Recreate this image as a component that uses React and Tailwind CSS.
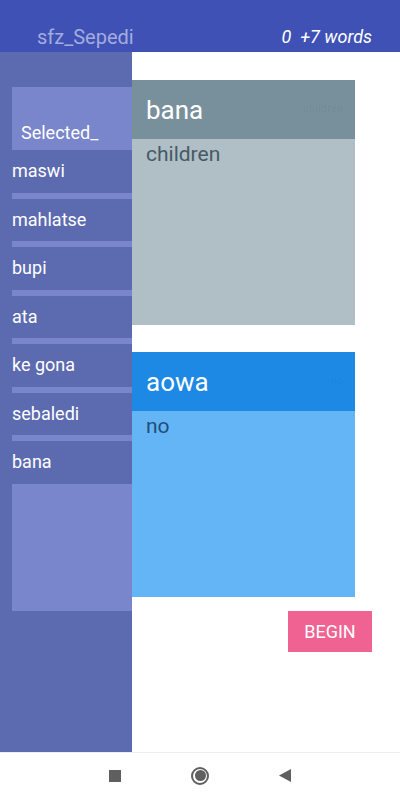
import React from 'react';

const words = ['maswi', 'mahlatse', 'bupi', 'ata', 'ke gona', 'sebaledi', 'bana'];

const Card = ({ title, meaning, head, body, text }) => (
    <div className="w-[223px]">
        <div className={`h-[59px] ${head} flex items-center justify-between pl-[14px] pr-[12px]`}>
            <span className="text-white text-[26px] leading-none">{title}</span>
            <span className="text-[11px] text-black/[0.04] font-bold">{meaning}</span>
        </div>
        <div className={`h-[186px] ${body} pl-[14px] pt-[3px]`}>
            <span className={`text-[21px] leading-[24px] ${text}`}>{meaning}</span>
        </div>
    </div>
);

const App = () => {
    return (
        <div className="w-[400px] h-[800px] flex flex-col bg-white overflow-hidden" style={{ fontFamily: 'Roboto, "Liberation Sans", sans-serif' }}>
            <div className="h-[52px] bg-[#3f51b5] flex items-end justify-between pb-[3px] pl-[37px] pr-[28px] shrink-0">
                <span className="text-[#a3acdf] text-[20px] leading-[24px]">sfz_Sepedi</span>
                <span className="text-white italic text-[18px] leading-[24px]">0&nbsp;&nbsp;+7 words</span>
            </div>

            <div className="flex flex-row h-[700px]">
                <div className="w-[132px] bg-[#5c6bb0] pl-[12px] pt-[35px] shrink-0">
                    <div className="h-[63px] bg-[#7986cb] flex items-end pl-[9px] pb-[8px]">
                        <span className="text-white text-[18px] leading-none">Selected_</span>
                    </div>
                    {words.map((w, i) => (
                        <div key={w}>
                            <div className="h-[42.5px] flex items-center">
                                <span className="text-white text-[18px] leading-none">{w}</span>
                            </div>
                            {i < words.length - 1 && <div className="h-[6px] bg-[#7986cb]" />}
                        </div>
                    ))}
                    <div className="h-[127px] bg-[#7986cb]" />
                </div>

                <div className="flex-1 flex flex-col pt-[28px]">
                    <Card title="bana" meaning="children" head="bg-[#78909c]" body="bg-[#b0bec5]" text="text-[#455a64]" />
                    <div className="h-[27px]" />
                    <Card title="aowa" meaning="no" head="bg-[#1e88e5]" body="bg-[#64b5f6]" text="text-[#1f4e79]" />
                    <div className="flex justify-end pr-[28px] pt-[14px]">
                        <button className="w-[84px] h-[41px] bg-[#f06292] text-white text-[18px] leading-none">BEGIN</button>
                    </div>
                </div>
            </div>

            <div className="h-[48px] border-t border-[#eeeeee] bg-white flex items-center justify-center gap-[70px] pb-[2px]">
                <div className="w-[12px] h-[12px] bg-[#5f5f5f]" />
                <div className="w-[18px] h-[18px] rounded-full border-[2px] border-[#5f5f5f] flex items-center justify-center">
                    <div className="w-[11px] h-[11px] rounded-full bg-[#5f5f5f]" />
                </div>
                <svg width="12" height="13" viewBox="0 0 12 13">
                    <polygon points="12,0 12,13 0,6.5" fill="#5f5f5f" />
                </svg>
            </div>
        </div>
    );
};

export default App;
